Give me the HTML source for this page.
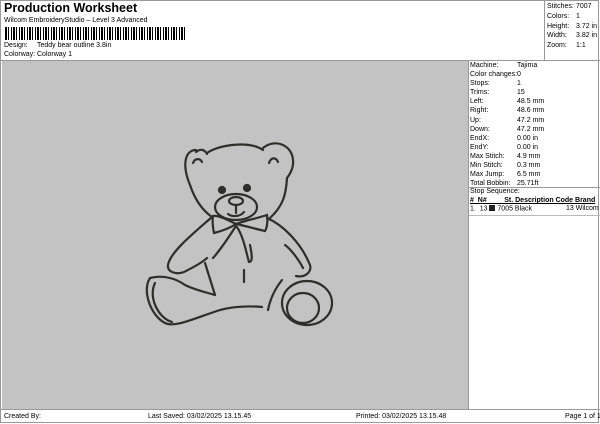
<!DOCTYPE html>
<html><head><style>
body{margin:0;width:600px;height:424px;background:#fff;font-family:"Liberation Sans",sans-serif;position:relative;overflow:hidden;color:#000}
.a{position:absolute;white-space:nowrap;font-size:7px}
</style></head><body>
<div style="position:absolute;left:0;top:0;width:599px;height:423px;border:1px solid #999;box-sizing:border-box"></div>
<div class="a" style="left:4px;top:1px;font-size:12.5px;font-weight:bold">Production Worksheet</div>
<div class="a" style="left:4px;top:17px">Wilcom EmbroideryStudio – Level 3 Advanced</div>
<div style="position:absolute;left:5px;top:27px;width:181px;height:13px;background:repeating-linear-gradient(90deg,#000 0 2px,#fff 2px 3px,#000 3px 4px,#fff 4px 6px,#000 6px 7px,#fff 7px 8px)"></div>
<div class="a" style="left:4px;top:42px">Design:</div><div class="a" style="left:37px;top:42px">Teddy bear outline 3.8in</div>
<div class="a" style="left:4px;top:51px">Colorway:</div><div class="a" style="left:37px;top:51px">Colorway 1</div>
<div style="position:absolute;left:544px;top:0;width:1px;height:60px;background:#999"></div>
<div class="a" style="left:547px;top:2px;line-height:9.8px">Stitches:<br>Colors:<br>Height:<br>Width:<br>Zoom:</div>
<div class="a" style="left:576px;top:2px;line-height:9.8px">7007<br>1<br>3.72 in<br>3.82 in<br>1:1</div>
<div style="position:absolute;left:0;top:60px;width:600px;height:1px;background:#999"></div>
<div style="position:absolute;left:2px;top:61px;width:466px;height:348px;background:#c3c3c3"></div>
<div style="position:absolute;left:468px;top:61px;width:1px;height:348px;background:#999"></div>
<div class="a" style="left:470px;top:61px;line-height:9.1px">Machine:<br>Color changes:<br>Stops:<br>Trims:<br>Left:<br>Right:<br>Up:<br>Down:<br>EndX:<br>EndY:<br>Max Stitch:<br>Min Stitch:<br>Max Jump:<br>Total Bobbin:</div>
<div class="a" style="left:517px;top:61px;line-height:9.1px">Tajima<br>0<br>1<br>15<br>48.5 mm<br>48.6 mm<br>47.2 mm<br>47.2 mm<br>0.00 in<br>0.00 in<br>4.9 mm<br>0.3 mm<br>6.5 mm<br>25.71ft</div>
<div style="position:absolute;left:469px;top:187px;width:131px;height:1px;background:#999"></div>
<div class="a" style="left:470px;top:188px">Stop Sequence:</div>
<div class="a" style="left:470px;top:197px;font-weight:bold;text-decoration:underline">#&nbsp; N#&nbsp;&nbsp;&nbsp;&nbsp;&nbsp;&nbsp;&nbsp;&nbsp; St. Description Code Brand</div>
<div class="a" style="left:470px;top:205px">1.&nbsp; 13 <span style="display:inline-block;width:6px;height:6px;background:#222;vertical-align:-0.5px"></span> 7005 Black</div>
<div class="a" style="left:566px;top:205px">13 Wilcom</div>
<div style="position:absolute;left:469px;top:215px;width:131px;height:1px;background:#bbb"></div>
<div style="position:absolute;left:0;top:409px;width:600px;height:1px;background:#999"></div>
<div class="a" style="left:4px;top:413px">Created By:</div>
<div class="a" style="left:148px;top:413px">Last Saved: 03/02/2025 13.15.45</div>
<div class="a" style="left:356px;top:413px">Printed: 03/02/2025 13.15.48</div>
<div class="a" style="left:565px;top:413px">Page 1 of 1</div>
<svg style="position:absolute;left:0;top:0" width="600" height="424" fill="none" stroke="#2e2e2c" stroke-width="2.2" stroke-linecap="round">
<path d="M196 150C186 150 181 163 190 185"/>
<path d="M196 152C201 148 205 150 207 154"/>
<path d="M193 163C195 158 200 158 202 162"/>
<path d="M207 153C220 144 250 141 263 150"/>
<path d="M263 148C275 138 292 145 293 160C294 168 290 174 287 178"/>
<path d="M269 163C271 157 276 157 278 162"/>
<path d="M190 185C195 200 202 210 212 217"/>
<path d="M287 178C286 195 283 206 270 218"/>
<ellipse cx="236" cy="207" rx="21" ry="13"/>
<ellipse cx="236" cy="201" rx="7" ry="4"/>
<circle cx="222" cy="190" r="3" fill="#2e2e2c"/><circle cx="247" cy="188" r="3" fill="#2e2e2c"/>
<path d="M236 205v8M228 214c4 3 12 3 16 -2"/>
<path d="M236 224C228 220 218 215 213 216C212 222 213 228 214 233C222 231 230 228 236 224C244 221 258 218 267 215C268 221 267 228 265 231C256 229 246 226 236 224"/>
<path d="M236 226C230 235 222 248 213 258M237 227C244 238 246 252 249 262M250 245C252 255 253 262 249 262"/>
<path d="M212 217C195 232 170 252 168 265C167 272 176 275 184 272C196 266 203 262 207 258"/>
<path d="M267 218C285 226 302 245 310 265C312 272 305 278 296 276"/>
<path d="M285 245C292 250 300 262 303 268"/>
<path d="M205 263L215 295"/>
<path d="M244 270L244 282"/>
<path d="M150 278C165 274 178 280 185 285C195 290 205 292 215 295"/>
<path d="M150 278C142 290 150 315 165 323C175 328 195 318 220 310C235 306 250 306 262 307"/>
<path d="M155 283C148 297 158 318 172 322"/>
<ellipse cx="307" cy="303" rx="25" ry="22"/>
<ellipse cx="303" cy="308" rx="16" ry="15"/>
<path d="M282 280C274 290 270 300 268 310"/>
</svg>
</body></html>
